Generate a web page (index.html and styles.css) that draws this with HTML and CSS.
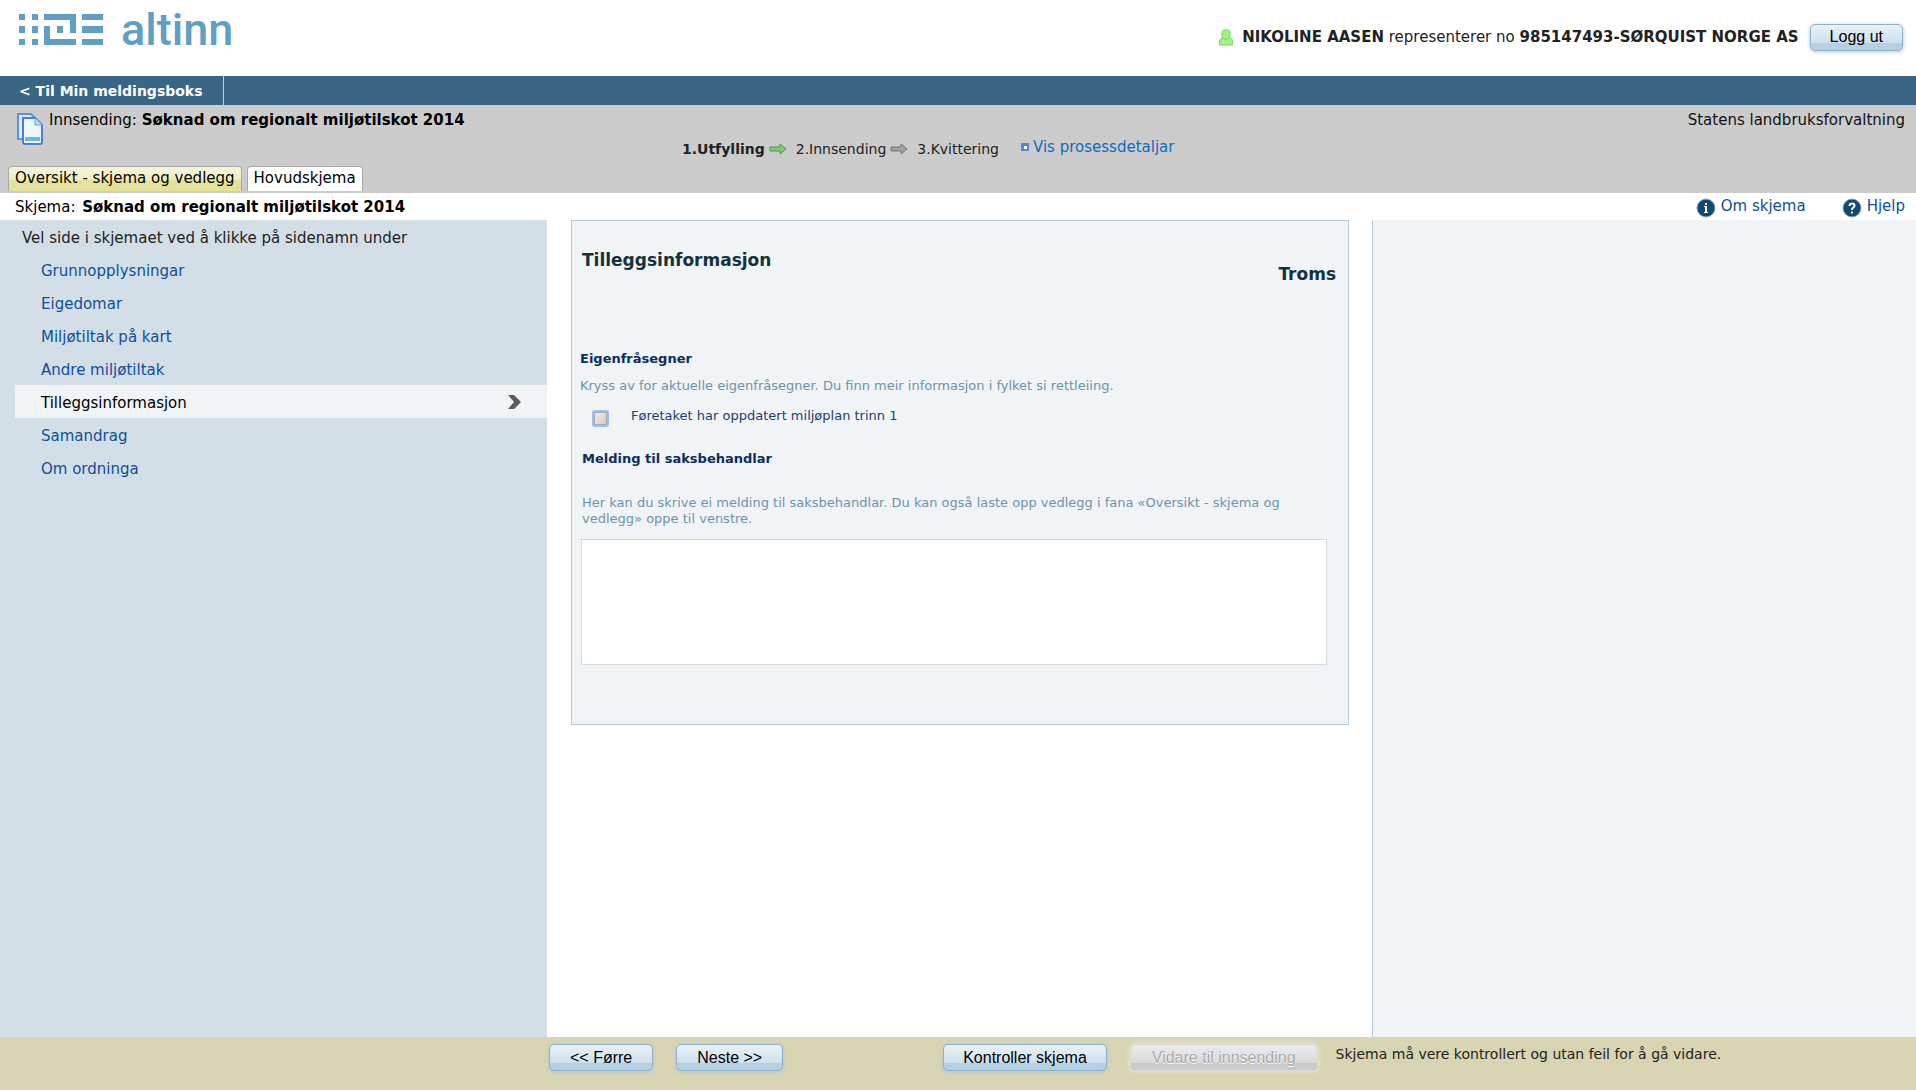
FILE: index.html
```html
<!DOCTYPE html>
<html lang="nn">
<head>
<meta charset="utf-8">
<meta name="viewport" content="width=device-width, initial-scale=1">
<title>Altinn - Søknad om regionalt miljøtilskot 2014</title>
<link rel="stylesheet" href="styles.css">
</head>
<body>
<header class="top">
  <a class="logo" href="#">
    <svg width="84" height="31" viewBox="0 0 84 31" fill="currentColor" aria-hidden="true">
      <path d="M0 0h6v6H0zM0 12h6v7H0zM0 25h6v6H0zM13 0h6v6h-6zM13 12h6v7h-6zM13 25h6v6h-6zM25 0h32v19h-6V6H25zM25 12h6v13h26v6H25zM38 12h6v7h-6zM63 0h21v6H63zM63 12h21v7H63zM63 25h21v6H63z"/>
    </svg>
    <span class="logo-name">altinn</span>
  </a>
  <div class="user">
    <svg width="16" height="17" viewBox="0 0 16 17" aria-hidden="true">
      <path d="M6 1H10Q12 1 12 3V7Q12 8 11.500 9Q14.500 9.500 14.500 12V16H1.500V12Q1.500 9.500 4.500 9Q4 8 4 7V3Q4 1 6 1Z" fill="#a4f08c" stroke="#6fdc58"/>
      <path d="M4.500 9Q8 12 11.500 9" fill="none" stroke="#6fdc58"/>
    </svg>
    <span><strong>NIKOLINE AASEN</strong> representerer no <strong>985147493-SØRQUIST NORGE AS</strong></span>
    <button class="btn" type="button">Logg ut</button>
  </div>
</header>

<nav class="menu"><a href="#">&lt; Til Min meldingsboks</a></nav>

<section class="task">
  <div class="task-left">
    <div class="task-title">
      <svg width="27" height="32" viewBox="0 0 27 32" aria-hidden="true">
        <path d="M1 1H14L19 6V26H1Z" fill="#dcecfc" stroke="#5a92dc" stroke-width="2"/>
        <path d="M6 5H18L25 12V29Q25 31 23 31H8Q6 31 6 29Z" fill="#eef6ff" stroke="#4a80d0" stroke-width="2"/>
        <path d="M18 5V12H25" fill="#c4dcf8" stroke="#6a9ce0"/>
        <path d="M8 24H23V28H8Z" fill="#62b8f4"/>
      </svg>
      <span>Innsending:</span>
      <h1>Søknad om regionalt miljøtilskot 2014</h1>
    </div>
    <div class="tabs">
      <a class="tab tab-overview" href="#">Oversikt - skjema og vedlegg</a>
      <a class="tab" href="#">Hovudskjema</a>
    </div>
  </div>
  <div class="steps">
    <strong>1.Utfylling</strong>
    <svg width="18" height="12" viewBox="0 0 18 12" aria-hidden="true"><path d="M1 4H11V1L17 6L11 11V8H1Z" fill="#86c97a" stroke="#4f9a48"/></svg>
    <span>2.Innsending</span>
    <svg width="18" height="12" viewBox="0 0 18 12" aria-hidden="true"><path d="M1 4H11V1L17 6L11 11V8H1Z" fill="#a2a2a2" stroke="#777"/></svg>
    <span>3.Kvittering</span>
    <a class="details" href="#">
      <svg width="8" height="8" viewBox="0 0 8 8" aria-hidden="true"><path d="M0 0H8V8H0Z" fill="#5485dc"/><path d="M3 3H6V6H3Z" fill="#fff"/></svg>
      Vis prosessdetaljar
    </a>
  </div>
  <div class="agency">Statens landbruksforvaltning</div>
</section>

<section class="form-bar">
  <div class="form-name">Skjema: <strong>Søknad om regionalt miljøtilskot 2014</strong></div>
  <div class="help">
    <a href="#">
      <svg width="20" height="20" viewBox="0 0 20 20" aria-hidden="true"><circle cx="10" cy="10" r="9" fill="#0f4a72" stroke="#8aa5b8"/><path d="M8 8H11V14H12V15H8V14H9V9H8ZM9 5H11V7H9Z" fill="#fff"/></svg>
      Om skjema
    </a>
    <a href="#">
      <svg width="20" height="20" viewBox="0 0 20 20" aria-hidden="true"><circle cx="10" cy="10" r="9" fill="#0f4a72" stroke="#8aa5b8"/><path d="M7.500 8Q7.500 5.500 10 5.500T12.500 7.800Q12.500 9 11 9.800Q10 10.500 10 12M10 13.500V15.500" fill="none" stroke="#fff" stroke-width="2"/></svg>
      Hjelp
    </a>
  </div>
</section>

<div class="columns">
  <nav class="side">
    <p>Vel side i skjemaet ved å klikke på sidenamn under</p>
    <ul>
      <li><a href="#">Grunnopplysningar</a></li>
      <li><a href="#">Eigedomar</a></li>
      <li><a href="#">Miljøtiltak på kart</a></li>
      <li><a href="#">Andre miljøtiltak</a></li>
      <li><a class="current" href="#" aria-current="page">Tilleggsinformasjon
        <svg width="13" height="14" viewBox="0 0 13 14" aria-hidden="true"><path d="M0 0H6L13 7L6 14H0L6 7Z" fill="#5c5c5c"/></svg></a></li>
      <li><a href="#">Samandrag</a></li>
      <li><a href="#">Om ordninga</a></li>
    </ul>
  </nav>
  <main class="content">
    <form class="panel">
      <div class="panel-head">
        <h2>Tilleggsinformasjon</h2>
        <p class="county">Troms</p>
      </div>
      <h3>Eigenfråsegner</h3>
      <p class="hint">Kryss av for aktuelle eigenfråsegner. Du finn meir informasjon i fylket si rettleiing.</p>
      <div class="check">
        <input type="checkbox" id="miljoplan">
        <label for="miljoplan">Føretaket har oppdatert miljøplan trinn 1</label>
      </div>
      <h3 class="message-title"><label for="melding">Melding til saksbehandlar</label></h3>
      <p class="hint message-hint">Her kan du skrive ei melding til saksbehandlar. Du kan også laste opp vedlegg i fana «Oversikt - skjema og vedlegg» oppe til venstre.</p>
      <textarea id="melding"></textarea>
    </form>
  </main>
  <aside class="extra"></aside>
</div>

<footer class="actions">
  <div class="paging">
    <button class="btn" type="button">&lt;&lt; Førre</button>
    <button class="btn" type="button">Neste &gt;&gt;</button>
  </div>
  <div class="submit">
    <button class="btn" type="button">Kontroller skjema</button>
    <button class="btn" type="button" disabled>Vidare til innsending</button>
    <span>Skjema må vere kontrollert og utan feil for å gå vidare.</span>
  </div>
</footer>
</body>
</html>
```
FILE: styles.css
```css
* {
  box-sizing: border-box;
}

body {
  margin: 0;
  min-height: 100vh;
  display: flex;
  flex-direction: column;
  font: 15px/20px Verdana, "DejaVu Sans", sans-serif;
  color: #222;
  background: #fff;
}

h1, h2, h3, p, ul {
  margin: 0;
  padding: 0;
}

a {
  color: #0d4f9c;
  text-decoration: none;
}

svg {
  flex: none;
}

.top {
  display: flex;
  justify-content: space-between;
  height: 76px;
  padding: 0 13px 0 19px;
}

.logo {
  display: flex;
  gap: 18px;
  padding-top: 14px;
  color: #609fc4;
}

.logo-name {
  font: 500 45px/32px Roboto, sans-serif;
}

.user {
  display: flex;
  align-items: center;
  gap: 8px;
  height: 74px;
}

.user .btn {
  margin-left: 3px;
}

.btn {
  height: 27px;
  padding: 0 19px;
  border: 1px solid #8eafc8;
  border-radius: 5px;
  background: linear-gradient(#e8f2f8, #cee0ec 72%, #b3d1e6 72%);
  box-shadow: 0 1px 4px #b8c4cc;
  font: 16px/24px "Liberation Sans", Arial, sans-serif;
  color: #000;
  white-space: nowrap;
}

.btn:disabled {
  margin-left: 5px;
  padding: 0 21px;
  border-color: #d8d8d8;
  background: linear-gradient(#ececec, #dadada 72%, #cacaca 72%);
  box-shadow: 0 0 5px #f0eedc;
  color: #aaa;
  text-shadow: 0 1px #fff;
}

.menu {
  display: flex;
  background: #3a6585;
}

.menu a {
  padding: 5px 20px 4px 19px;
  border-right: 1px solid #ccc;
  font-size: 14px;
  font-weight: bold;
  color: #fff;
}

.task,
.columns {
  display: grid;
  grid-template-columns: 547fr 825fr 544fr;
}

.task {
  min-height: 88px;
  background: #ccc;
}

.task-left {
  display: flex;
  flex-direction: column;
  justify-content: space-between;
  padding: 5px 0 2px 8px;
}

.task-title {
  display: flex;
  gap: 5px;
  padding-left: 9px;
  color: #000;
}

.task-title svg {
  margin-top: 3px;
}

.task-title h1 {
  font-size: 15px;
  line-height: 20px;
}

.tabs {
  display: flex;
  gap: 5px;
}

.tab {
  height: 25px;
  padding: 1px 6px;
  border: 1px solid #aaa;
  border-bottom: 0;
  border-radius: 4px 4px 0 0;
  background: #fff;
  color: #000;
}

.tab-overview {
  background: linear-gradient(#f6f5dc, #efedbf 55%, #e5e09a 55%);
}

.steps {
  display: flex;
  align-items: center;
  gap: 4px;
  padding-left: 135px;
  font-size: 14px;
  white-space: nowrap;
}

.steps svg + span {
  margin-left: 5px;
}

.details {
  display: flex;
  align-items: center;
  gap: 4px;
  margin-left: 18px;
  padding-bottom: 4px;
  font-size: 15px;
  color: #0a6ebd;
}

.agency {
  padding: 5px 11px;
  text-align: right;
  color: #111;
}

.form-bar {
  display: flex;
  justify-content: space-between;
  align-items: center;
  height: 27px;
  padding: 0 11px 0 15px;
  color: #000;
}

.form-name strong {
  margin-left: 2px;
}

.help {
  display: flex;
  gap: 36px;
}

.help a {
  display: flex;
  gap: 5px;
}

.help svg {
  margin-top: 2px;
}

.columns {
  flex: 1;
}

.side {
  background: #d2dfe7;
}

.side p {
  padding: 8px 0 5px 22px;
}

.side ul {
  padding-left: 15px;
  list-style: none;
}

.side a {
  display: flex;
  justify-content: space-between;
  height: 33px;
  padding: 8px 26px 0;
}

.side svg {
  margin-top: 2px;
}

.side .current {
  background: #f0f4f7;
  color: #000;
}

.content {
  padding: 0 23px 0 24px;
}

.panel {
  padding: 28px 12px 59px 8px;
  border: 1px solid #b5cadb;
  background: #f0f4f7;
  font-size: 13px;
  line-height: 16px;
}

.panel-head {
  display: flex;
  justify-content: space-between;
  padding-left: 2px;
  color: #14323c;
}

.panel h2,
.county {
  font-size: 17px;
  font-weight: bold;
  line-height: 22px;
}

.county {
  padding-top: 14px;
}

.panel h3 {
  margin-top: 66px;
  font-size: 13px;
  color: #0a2e62;
}

.hint {
  margin-top: 11px;
  color: #6d93aa;
}

.check {
  display: flex;
  gap: 22px;
  margin-top: 14px;
  padding-left: 12px;
  color: #223c74;
}

.check input {
  appearance: none;
  width: 17px;
  height: 17px;
  margin: 2px 0 0;
  border: 2px solid #9bbcf8;
  border-radius: 3px;
  background: linear-gradient(135deg, #eee, #ccc);
  box-shadow: inset 0 0 0 1px #aaa;
}

.panel .message-title {
  margin-top: 24px;
  padding-left: 2px;
}

.message-hint {
  margin-top: 28px;
  padding: 0 30px 0 2px;
}

.panel textarea {
  display: block;
  width: calc(100% - 10px);
  height: 126px;
  margin: 12px 0 0 1px;
  border: 1px solid #d6d8da;
  background: #fff;
  resize: none;
}

.extra {
  border-left: 1px solid #b5cadb;
  background: #f0f4f7;
}

.actions {
  display: flex;
  gap: 160px;
  min-height: 53px;
  padding: 7px 0 0 549px;
  background: #d8d4b4;
}

.paging {
  display: flex;
  gap: 23px;
}

.paging .btn {
  padding: 0 20px;
}

.submit {
  display: flex;
  gap: 18px;
  font-size: 14px;
}
```
